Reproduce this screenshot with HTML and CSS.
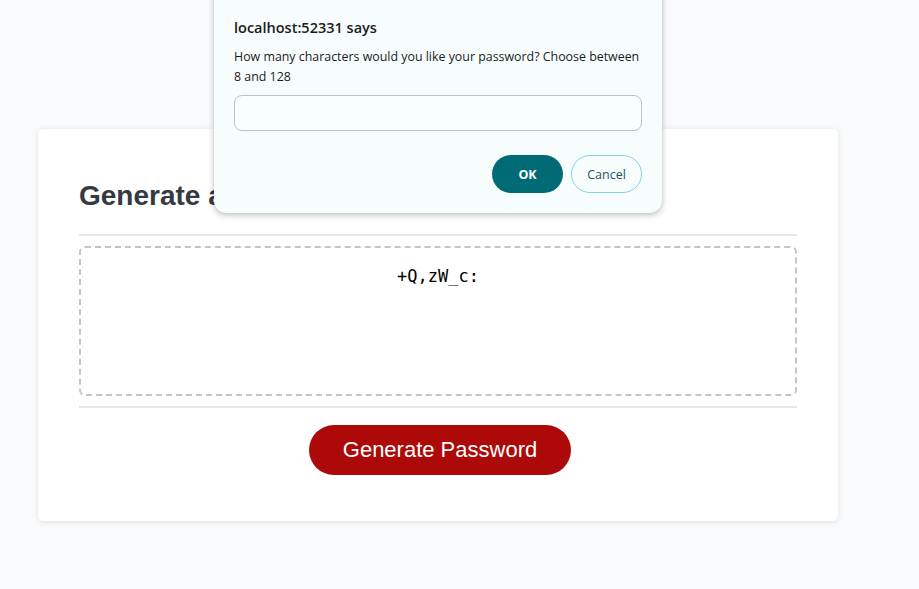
FILE: index.html
```html
<!DOCTYPE html>
<html lang="en">
<head>
<meta charset="utf-8">
<title>Password Generator</title>
<link rel="stylesheet" href="styles.css">
</head>
<body>
<main class="page">
  <section class="card">
    <h2 class="card-title">Generate a Password</h2>
    <div class="card-body">
      <textarea class="password-box" readonly>+Q,zW_c:</textarea>
    </div>
    <div class="card-footer">
      <button class="btn-generate" type="button">Generate Password</button>
    </div>
  </section>
</main>
<div class="dialog">
  <div class="dialog-title">localhost:52331 says</div>
  <div class="dialog-msg">How many characters would you like your password? Choose between 8 and 128</div>
  <div class="dialog-input"></div>
  <div class="dialog-actions">
    <button class="dlg-btn dlg-ok" type="button">OK</button>
    <button class="dlg-btn dlg-cancel" type="button">Cancel</button>
  </div>
</div>
</body>
</html>
```
FILE: styles.css
```css
html, body {
  margin: 0;
  padding: 0;
  background: #f9fafb;
  height: 100%;
}
body {
  font-family: "Liberation Sans", Arial, sans-serif;
  overflow: hidden;
}
.page {
  padding: 129px 0 0 38px;
}
.card {
  box-sizing: border-box;
  width: 800px;
  height: 392px;
  background: #fff;
  border-radius: 5px;
  box-shadow: 0 1px 6px rgba(0, 0, 0, 0.10);
  padding: 0 41px;
  display: flex;
  flex-direction: column;
}
.card-title {
  margin: 0;
  padding: 50px 0 21px;
  font-size: 28px;
  font-weight: bold;
  color: #343a42;
  line-height: 34px;
  border-bottom: 2px solid #e6e6e6;
}
.card-body {
  padding: 10px 0 10px;
  border-bottom: 2px solid #e6e6e6;
}
.password-box {
  display: block;
  box-sizing: border-box;
  width: 100%;
  height: 150px;
  border: 2px dashed #c0c4cb;
  border-radius: 6px;
  resize: none;
  background: #fff;
  text-align: center;
  font-family: "DejaVu Sans Mono", monospace;
  font-size: 17px;
  color: #000;
  padding: 18px 10px;
  outline: none;
}
.card-footer {
  display: flex;
  justify-content: center;
  padding: 17px 0 0 4px;
}
.btn-generate {
  width: 262px;
  height: 50px;
  border: none;
  border-radius: 25px;
  background: #ae0909;
  color: #fff;
  font-family: "Liberation Sans", Arial, sans-serif;
  font-size: 22px;
  cursor: pointer;
}
.dialog {
  position: absolute;
  left: 214px;
  top: -13px;
  width: 448px;
  box-sizing: border-box;
  padding: 31px 20px 20px;
  background: #f7fdfd;
  border-radius: 12px;
  box-shadow: 0 2px 6px rgba(0, 0, 0, 0.25), 0 0 1px rgba(0,0,0,0.2);
  font-family: "Open Sans", "Noto Sans", sans-serif;
  color: #1b1b1b;
}
.dialog-title {
  font-size: 14.5px;
  font-weight: 600;
  line-height: 20px;
}
.dialog-msg {
  margin-top: 9px;
  font-size: 12.4px;
  line-height: 20px;
}
.dialog-input {
  margin-top: 8px;
  height: 36px;
  box-sizing: border-box;
  border: 1px solid #bcc3c6;
  border-radius: 8px;
  background: #f9fefe;
}
.dialog-actions {
  margin-top: 24px;
  display: flex;
  justify-content: flex-end;
  gap: 8px;
}
.dlg-btn {
  box-sizing: border-box;
  width: 71px;
  height: 38px;
  border-radius: 19px;
  font-family: "Open Sans", "Noto Sans", sans-serif;
  font-size: 12.5px;
}
.dlg-ok {
  background: #006b75;
  border: none;
  color: #fff;
  font-weight: 700;
}
.dlg-cancel {
  background: #f7fdfd;
  border: 1px solid #86d4e2;
  color: #1c5461;
  font-weight: 500;
}
```
